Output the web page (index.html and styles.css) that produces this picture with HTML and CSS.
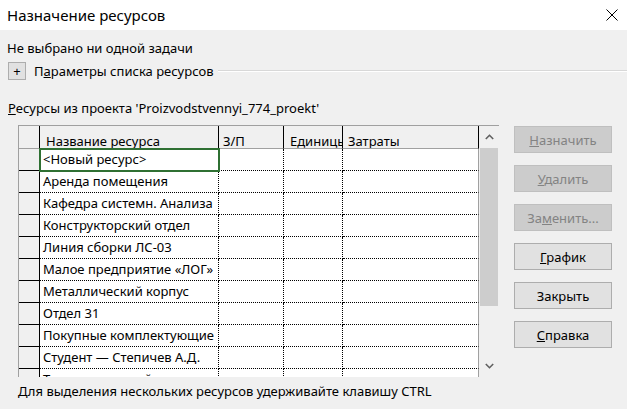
FILE: index.html
```html
<!DOCTYPE html>
<html lang="ru">
<head>
<meta charset="utf-8">
<title>Назначение ресурсов</title>
<link rel="stylesheet" href="styles.css">
</head>
<body>
<div class="window">
  <header class="titlebar">
    <span class="title">Назначение ресурсов</span>
    <svg class="close" width="12" height="12" viewBox="0 0 12 12"><path d="M0.5 0.5L11.5 11.5M11.5 0.5L0.5 11.5" stroke="#000" stroke-width="1" fill="none"/></svg>
  </header>
  <main class="content">
    <p class="task">Не выбрано ни одной задачи</p>
    <div class="options">
      <span class="expand">+</span>
      <span class="options-label">П<u>а</u>раметры списка ресурсов</span>
      <span class="groove"></span>
    </div>
    <p class="caption"><u>Р</u>есурсы из проекта 'Proizvodstvennyi_774_proekt'</p>
    <div class="work">
      <div class="grid">
        <div class="cells">
          <div class="row head">
            <div class="c c0"></div>
            <div class="c c1">Название ресурса</div>
            <div class="c c2">З/П</div>
            <div class="c c3">Единицы</div>
            <div class="c c4">Затраты</div>
          </div>
          <div class="row">
            <div class="c c0"></div>
            <div class="c c1 selected">&lt;Новый ресурс&gt;</div>
            <div class="c c2"></div><div class="c c3"></div><div class="c c4"></div>
          </div>
          <div class="row">
            <div class="c c0"></div>
            <div class="c c1">Аренда помещения</div>
            <div class="c c2"></div><div class="c c3"></div><div class="c c4"></div>
          </div>
          <div class="row">
            <div class="c c0"></div>
            <div class="c c1">Кафедра системн. Анализа</div>
            <div class="c c2"></div><div class="c c3"></div><div class="c c4"></div>
          </div>
          <div class="row">
            <div class="c c0"></div>
            <div class="c c1">Конструкторский отдел</div>
            <div class="c c2"></div><div class="c c3"></div><div class="c c4"></div>
          </div>
          <div class="row">
            <div class="c c0"></div>
            <div class="c c1">Линия сборки ЛС-03</div>
            <div class="c c2"></div><div class="c c3"></div><div class="c c4"></div>
          </div>
          <div class="row">
            <div class="c c0"></div>
            <div class="c c1">Малое предприятие «ЛОГ»</div>
            <div class="c c2"></div><div class="c c3"></div><div class="c c4"></div>
          </div>
          <div class="row">
            <div class="c c0"></div>
            <div class="c c1">Металлический корпус</div>
            <div class="c c2"></div><div class="c c3"></div><div class="c c4"></div>
          </div>
          <div class="row">
            <div class="c c0"></div>
            <div class="c c1">Отдел 31</div>
            <div class="c c2"></div><div class="c c3"></div><div class="c c4"></div>
          </div>
          <div class="row">
            <div class="c c0"></div>
            <div class="c c1">Покупные комплектующие</div>
            <div class="c c2"></div><div class="c c3"></div><div class="c c4"></div>
          </div>
          <div class="row">
            <div class="c c0"></div>
            <div class="c c1">Студент — Степичев А.Д.</div>
            <div class="c c2"></div><div class="c c3"></div><div class="c c4"></div>
          </div>
          <div class="row last">
            <div class="c c0"></div>
            <div class="c c1">Технологический отдел</div>
            <div class="c c2"></div><div class="c c3"></div><div class="c c4"></div>
          </div>
        </div>
        <div class="scrollbar">
          <div class="arrow">
            <svg width="9" height="6" viewBox="0 0 9 6"><path d="M0.8 5L4.5 1.3L8.2 5" stroke="#606060" stroke-width="1.6" fill="none"/></svg>
          </div>
          <div class="track"><div class="thumb"></div></div>
          <div class="arrow">
            <svg width="9" height="6" viewBox="0 0 9 6"><path d="M0.8 1L4.5 4.7L8.2 1" stroke="#606060" stroke-width="1.6" fill="none"/></svg>
          </div>
        </div>
      </div>
      <div class="buttons">
        <button class="btn" disabled><u>Н</u>азначить</button>
        <button class="btn" disabled><u>У</u>далить</button>
        <button class="btn" disabled>За<u>м</u>енить...</button>
        <button class="btn"><u>Г</u>рафик</button>
        <button class="btn">Закрыть</button>
        <button class="btn"><u>С</u>правка</button>
      </div>
    </div>
    <p class="hint">Для выделения нескольких ресурсов удерживайте клавишу CTRL</p>
  </main>
</div>
</body>
</html>
```

FILE: styles.css
```css
* { box-sizing: border-box; }

html, body {
  margin: 0;
  padding: 0;
}

body {
  width: 627px;
  height: 409px;
  overflow: hidden;
  background: #f0f0f0;
  font-family: "Noto Sans", "Open Sans", sans-serif;
  font-size: 13px;
  color: #000;
}

.window {
  width: 627px;
  height: 409px;
}

.titlebar {
  height: 30px;
  background: #fff;
  display: flex;
  align-items: center;
  justify-content: space-between;
  padding: 0 9px 0 7px;
}

.title {
  font-size: 15px;
  line-height: 20px;
}

.close {
  display: block;
}

.content {
  padding: 0 0 0 7px;
}

.task {
  margin: 10px 0 0 0;
  line-height: 16px;
}

.options {
  display: flex;
  align-items: center;
  height: 18px;
  margin-top: 6px;
}

.expand {
  width: 18px;
  height: 18px;
  margin-left: 1px;
  background: #e1e1e1;
  border: 1px solid #adadad;
  display: flex;
  align-items: center;
  justify-content: center;
  font-size: 13px;
  line-height: 1;
}

.options-label {
  margin-left: 8px;
  line-height: 16px;
}

.groove {
  flex: 1;
  height: 2px;
  margin-left: 5px;
  border-top: 1px solid #d8d8d8;
  border-bottom: 1px solid #ffffff;
}

.caption {
  margin: 20px 0 0 1px;
  line-height: 16px;
}

.work {
  display: flex;
  align-items: flex-start;
  margin-top: 9px;
  padding-left: 11px;
}

.grid {
  display: flex;
  width: 481px;
  height: 252px;
  border-top: 1px solid #a0a0a0;
  border-left: 1px solid #a0a0a0;
  overflow: hidden;
  background: #fff;
}

.cells {
  width: 460px;
  flex: none;
}

.row {
  display: flex;
  height: 22px;
}

.row.head {
  height: 23px;
}

.row.last {
  height: 8px;
  overflow: hidden;
}

.row.last .c {
  height: 21px;
  border-bottom: none;
}

.c {
  height: 100%;
  white-space: nowrap;
  overflow: hidden;
  border-right: 1px dotted #000;
  border-bottom: 1px dotted #000;
  background: #fff;
  line-height: 21px;
  padding-left: 3px;
}

.c0 {
  width: 21px;
  background: #f0f0f0;
  border-right: 1px solid #000;
  border-bottom: 1px solid #000;
  padding: 0;
}

.c1 { width: 179px; }
.c2 { width: 65px; }
.c3 { width: 59px; }
.c4 { width: 136px; border-right: 1px solid #a0a0a0; }

.head .c {
  background: #f0f0f0;
  border-right: 1px solid #000;
  border-bottom: 1px solid #a0a0a0;
  line-height: 14px;
  padding-top: 8px;
  padding-left: 5px;
}

.head .c1 { padding-left: 6px; }
.head .c2 { padding-left: 4px; }
.head .c3 { padding-left: 6px; }

.selected {
  outline: 2px solid #2f7033;
  outline-offset: -1px;
  position: relative;
}

.scrollbar {
  width: 20px;
  flex: none;
  background: #f0f0f0;
  display: flex;
  flex-direction: column;
}

.arrow {
  height: 22px;
  display: flex;
  align-items: center;
  justify-content: center;
  flex: none;
}

.track {
  flex: 1;
  padding: 0 1px 0 1px;
}

.thumb {
  height: 158px;
  background: #cdcdcd;
}

.buttons {
  display: flex;
  flex-direction: column;
  gap: 12px;
  margin-left: 15px;
  padding-top: 1px;
}

.btn {
  width: 98px;
  height: 27px;
  background: #e1e1e1;
  border: 1px solid #adadad;
  font-family: inherit;
  font-size: 13px;
  color: #000;
  padding: 0;
}

.btn:disabled {
  background: #cccccc;
  border-color: #bfbfbf;
  color: #838383;
}

.hint {
  margin: 6px 0 0 11px;
  line-height: 16px;
}
```
